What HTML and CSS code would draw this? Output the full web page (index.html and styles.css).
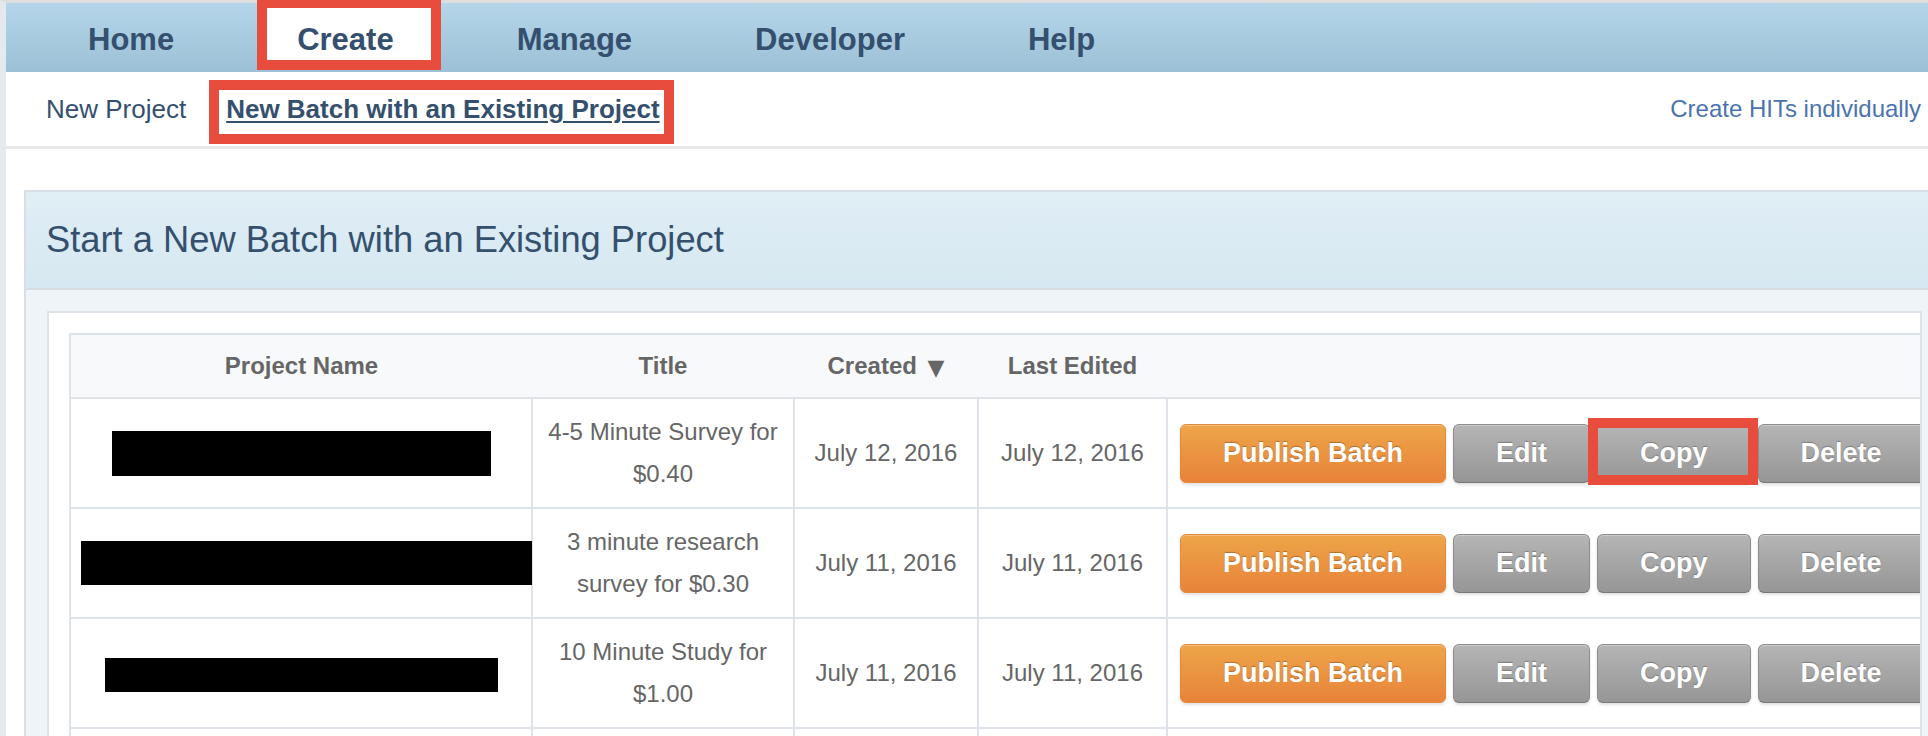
FILE: index.html
```html
<!DOCTYPE html>
<html lang="en">
<head>
<meta charset="utf-8">
<title>Create - New Batch with an Existing Project</title>
<link rel="stylesheet" href="styles.css">
</head>
<body>
<div class="page">
  <nav class="topnav">
    <a class="tab" href="#">Home</a>
    <a class="tab active" href="#">Create</a>
    <a class="tab" href="#">Manage</a>
    <a class="tab" href="#">Developer</a>
    <a class="tab" href="#">Help</a>
  </nav>

  <div class="subnav">
    <a class="sub-link" href="#">New Project</a>
    <a class="sub-link current" href="#">New Batch with an Existing Project</a>
    <a class="sub-right" href="#">Create HITs individually</a>
  </div>

  <section class="panel">
    <header class="panel-head">
      <h1>Start a New Batch with an Existing Project</h1>
    </header>
    <div class="panel-body">
      <div class="table-box">
        <table class="projects">
          <colgroup>
            <col class="c-name">
            <col class="c-title">
            <col class="c-created">
            <col class="c-edited">
            <col class="c-actions">
          </colgroup>
          <thead>
            <tr>
              <th>Project Name</th>
              <th>Title</th>
              <th class="sorted">Created <span class="arrow">&#9660;</span></th>
              <th>Last Edited</th>
              <th></th>
            </tr>
          </thead>
          <tbody>
            <tr>
              <td class="name"><span class="redact" style="width:379px;height:45px"></span></td>
              <td>4-5 Minute Survey for<br>$0.40</td>
              <td>July 12, 2016</td>
              <td>July 12, 2016</td>
              <td class="actions-cell">
                <div class="actions">
                  <a class="btn btn-orange" href="#">Publish Batch</a>
                  <a class="btn btn-gray" href="#">Edit</a>
                  <a class="btn btn-gray marked" href="#">Copy</a>
                  <a class="btn btn-gray" href="#">Delete</a>
                </div>
              </td>
            </tr>
            <tr>
              <td class="name"><span class="redact" style="width:451px;height:44px;margin-left:10px"></span></td>
              <td>3 minute research<br>survey for $0.30</td>
              <td>July 11, 2016</td>
              <td>July 11, 2016</td>
              <td class="actions-cell">
                <div class="actions">
                  <a class="btn btn-orange" href="#">Publish Batch</a>
                  <a class="btn btn-gray" href="#">Edit</a>
                  <a class="btn btn-gray" href="#">Copy</a>
                  <a class="btn btn-gray" href="#">Delete</a>
                </div>
              </td>
            </tr>
            <tr>
              <td class="name"><span class="redact" style="width:393px;height:34px"></span></td>
              <td>10 Minute Study for<br>$1.00</td>
              <td>July 11, 2016</td>
              <td>July 11, 2016</td>
              <td class="actions-cell">
                <div class="actions">
                  <a class="btn btn-orange" href="#">Publish Batch</a>
                  <a class="btn btn-gray" href="#">Edit</a>
                  <a class="btn btn-gray" href="#">Copy</a>
                  <a class="btn btn-gray" href="#">Delete</a>
                </div>
              </td>
            </tr>
            <tr>
              <td class="name"></td>
              <td></td>
              <td></td>
              <td></td>
              <td class="actions-cell"></td>
            </tr>
          </tbody>
        </table>
      </div>
    </div>
  </section>
</div>
</body>
</html>
```

FILE: styles.css
```css
html, body {
  margin: 0;
  padding: 0;
  height: 100%;
  overflow: hidden;
  background: #fff;
}

body {
  font-family: "Liberation Sans", Arial, sans-serif;
}

.page {
  border-left: 6px solid #e4e9ed;
  border-top: 3px solid #dedede;
  min-height: 100%;
}

/* ---------- top navigation ---------- */
.topnav {
  display: flex;
  align-items: center;
  box-sizing: border-box;
  height: 69px;
  padding: 4px 0 0 82px;
  gap: 123px;
  background: linear-gradient(#b5d6e9, #9cc0d6);
}

.tab {
  font-size: 31px;
  font-weight: bold;
  line-height: 1;
  color: #34506e;
  text-decoration: none;
}

.tab.active {
  position: relative;
  z-index: 0;
}

.tab.active::before {
  content: "";
  position: absolute;
  z-index: -1;
  left: -40px;
  right: -47px;
  top: -26px;
  bottom: -15px;
  background: #fff;
  border: 10px solid #e84c3d;
}

/* ---------- sub navigation ---------- */
.subnav {
  display: flex;
  align-items: center;
  box-sizing: border-box;
  height: 77px;
  padding: 0 7px 0 40px;
  gap: 40px;
  border-bottom: 3px solid #e8e8e8;
}

.sub-link {
  font-size: 26px;
  line-height: 1;
  color: #34506e;
  text-decoration: none;
}

.sub-link.current {
  position: relative;
  font-weight: bold;
  text-decoration: underline;
  text-decoration-thickness: 2px;
  text-underline-offset: 3px;
}

.sub-link.current::after {
  content: "";
  position: absolute;
  left: -17px;
  right: -14px;
  top: -16px;
  bottom: -22px;
  border: 10px solid #e84c3d;
  pointer-events: none;
}

.sub-right {
  margin-left: auto;
  font-size: 24px;
  line-height: 1;
  color: #4a74ae;
  text-decoration: none;
}

/* ---------- panel ---------- */
.panel {
  margin: 41px 0 0 18px;
  border: 2px solid #d8dfe4;
  border-right: none;
  background: #eef4f8;
}

.panel-head {
  display: flex;
  align-items: center;
  height: 96px;
  padding-left: 20px;
  background: linear-gradient(#e0eef5, #d6e8f1);
  border-bottom: 2px solid #d6dee4;
}

.panel-head h1 {
  margin: 0;
  font-size: 36.3px;
  font-weight: normal;
  line-height: 1;
  color: #34506e;
}

.panel-body {
  padding: 21px 6px 0 21px;
}

.table-box {
  background: #fff;
  border: 2px solid #dde3e8;
  padding: 20px 0 0 20px;
  overflow: hidden;
}

/* ---------- table ---------- */
.projects {
  border-collapse: collapse;
  table-layout: fixed;
  width: 1870px;
  border: 2px solid #dde3e8;
}

.c-name { width: 462px; }
.c-title { width: 262px; }
.c-created { width: 184px; }
.c-edited { width: 189px; }
.c-actions { width: 773px; }

.projects th {
  height: 62px;
  padding: 0;
  background: #f8f9fb;
  font-size: 24px;
  font-weight: bold;
  line-height: 1;
  color: #666;
  text-align: center;
  vertical-align: middle;
  border-bottom: 2px solid #dde3e8;
}

.arrow {
  font-family: "DejaVu Sans", sans-serif;
  font-size: 22px;
  margin-left: 4px;
  position: relative;
  top: 1px;
}

.projects td {
  height: 108px;
  padding: 0 8px;
  border: 2px solid #dde3e8;
  text-align: center;
  vertical-align: middle;
  font-size: 24px;
  line-height: 42px;
  color: #666;
}

.projects td.name {
  padding: 0;
  white-space: nowrap;
}

.redact {
  display: inline-block;
  vertical-align: middle;
  background: #000;
}

.projects td.actions-cell {
  padding: 0 0 0 12px;
  text-align: left;
}

.actions {
  display: flex;
  gap: 7px;
  white-space: nowrap;
}

/* ---------- buttons ---------- */
.btn {
  display: inline-flex;
  align-items: center;
  justify-content: center;
  box-sizing: border-box;
  height: 59px;
  padding: 0 42px;
  border: 1px solid;
  border-radius: 6px;
  font-size: 27px;
  font-weight: bold;
  line-height: 1;
  color: #fff;
  text-decoration: none;
  text-shadow: 0 -1px 1px rgba(0, 0, 0, 0.28);
  box-shadow: 0 2px 3px rgba(0, 0, 0, 0.12), inset 0 1px 0 rgba(255, 255, 255, 0.3);
}

.btn-orange {
  background: linear-gradient(#eea548, #e7833a);
  border-color: #e3893e;
}

.btn-gray {
  background: linear-gradient(#b5b5b5, #969696);
  border-color: #8d8d8d;
  border-bottom-color: #787878;
}

.btn.marked {
  position: relative;
}

.btn.marked::after {
  content: "";
  position: absolute;
  left: -10px;
  right: -8px;
  top: -7px;
  bottom: -3px;
  border: 10px solid #e84c3d;
  pointer-events: none;
}
```
